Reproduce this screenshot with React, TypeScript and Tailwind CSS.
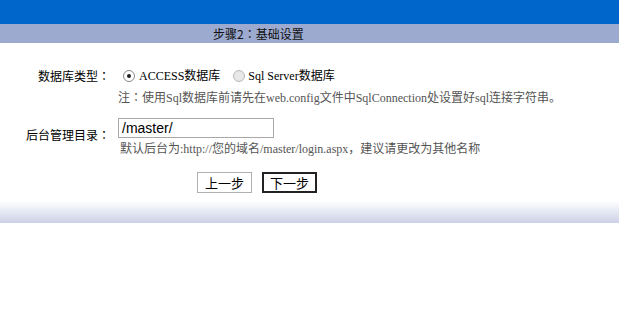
const C = () => <span className="font-['Noto_Sans_CJK_TC',sans-serif]">：</span>;

export default function App() {
  return (
    <div className="w-[619px] h-[320px] bg-white text-[12px] text-black font-['Liberation_Serif','Noto_Sans_CJK_SC',serif]">
      <div className="h-[24px] bg-[#0066cc]" />
      <div className="h-[19px] bg-[#9caad0] pl-[213px] leading-[19px] text-[#111] font-['Noto_Sans_CJK_SC',sans-serif]">
        步骤2<C />基础设置
      </div>
      <div className="pt-[23px]">
        <div className="flex">
          <div className="w-[110px] text-right leading-[20px] font-['Noto_Sans_CJK_SC',sans-serif]">数据库类型<C /></div>
          <div className="pl-[8px]">
            <div className="h-[20px] flex items-center">
              <span className="ml-[5px] w-[12px] h-[12px] rounded-full border border-[#8a8a8a] bg-white flex items-center justify-center">
                <span className="w-[4px] h-[4px] rounded-full bg-[#222]" />
              </span>
              <span className="ml-[4px] leading-[20px]">ACCESS数据库</span>
              <span className="ml-[13px] w-[12px] h-[12px] rounded-full border border-[#b8b8b8] bg-[#e8e8e8]" />
              <span className="ml-[3px] leading-[20px]">Sql Server数据库</span>
            </div>
            <div className="mt-[1px] leading-[20px] text-[#555]">
              注<C />使用Sql数据库前请先在web.config文件中SqlConnection处设置好sql连接字符串。
            </div>
          </div>
        </div>
        <div className="flex mt-[10px]">
          <div className="w-[110px] text-right pt-[7px] leading-[20px] font-['Noto_Sans_CJK_SC',sans-serif]">后台管理目录<C /></div>
          <div className="pl-[8px]">
            <div className="w-[156px] h-[20px] border border-[#a8a8a8] px-[3px] text-[14px] leading-[18px] font-['Liberation_Sans',sans-serif]">
              /master/
            </div>
            <div className="mt-[3px] pl-[2px] leading-[16px] text-[#555]">
              默认后台为:http://您的域名/master/login.aspx，建议请更改为其他名称
            </div>
          </div>
        </div>
        <div className="flex mt-[15px] pl-[197px] gap-[10px]">
          <div className="w-[55px] h-[21px] border border-[#b0b0b0] bg-white flex items-center justify-center font-['Noto_Sans_CJK_SC',sans-serif] text-[13px]">上一步</div>
          <div className="w-[55px] h-[21px] border-2 border-[#222] bg-white flex items-center justify-center font-['Noto_Sans_CJK_SC',sans-serif] text-[13px]">下一步</div>
        </div>
      </div>
      <div className="mt-[8px] h-[22px] bg-gradient-to-b from-white to-[#ccd1e6]" />
    </div>
  );
}
